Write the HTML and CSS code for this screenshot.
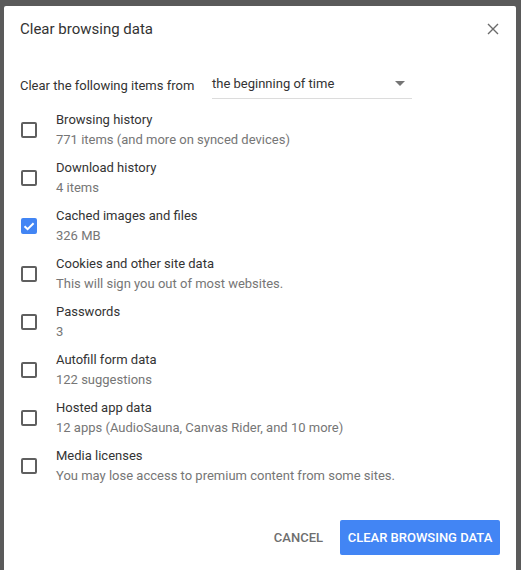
FILE: index.html
```html
<!DOCTYPE html>
<html>
<head>
<meta charset="utf-8">
<link rel="stylesheet" href="styles.css">
</head>
<body>
<div class="backdrop">
  <div class="dialog">
    <div class="header">
      <div class="title">Clear browsing data</div>
      <svg class="close" width="12" height="12" viewBox="0 0 12 12"><path d="M1 1L11 11M11 1L1 11" stroke="#6b6b6b" stroke-width="1.4" fill="none"/></svg>
    </div>
    <div class="range">
      <span class="range-label">Clear the following items from</span>
      <div class="select">
        <span>the beginning of time</span>
        <span class="arrow"></span>
      </div>
    </div>
    <div class="list">
      <div class="item"><span class="box"></span><div class="text"><div class="name">Browsing history</div><div class="sub">771 items (and more on synced devices)</div></div></div>
      <div class="item"><span class="box"></span><div class="text"><div class="name">Download history</div><div class="sub">4 items</div></div></div>
      <div class="item"><span class="box checked"><svg width="16" height="16" viewBox="0 0 16 16"><path d="M3.5 8.2L6.6 11.2L12.6 5.2" stroke="#fff" stroke-width="2" fill="none"/></svg></span><div class="text"><div class="name">Cached images and files</div><div class="sub">326 MB</div></div></div>
      <div class="item"><span class="box"></span><div class="text"><div class="name">Cookies and other site data</div><div class="sub">This will sign you out of most websites.</div></div></div>
      <div class="item"><span class="box"></span><div class="text"><div class="name">Passwords</div><div class="sub">3</div></div></div>
      <div class="item"><span class="box"></span><div class="text"><div class="name">Autofill form data</div><div class="sub">122 suggestions</div></div></div>
      <div class="item"><span class="box"></span><div class="text"><div class="name">Hosted app data</div><div class="sub">12 apps (AudioSauna, Canvas Rider, and 10 more)</div></div></div>
      <div class="item"><span class="box"></span><div class="text"><div class="name">Media licenses</div><div class="sub">You may lose access to premium content from some sites.</div></div></div>
    </div>
    <div class="actions">
      <button class="btn cancel">CANCEL</button>
      <button class="btn primary">CLEAR BROWSING DATA</button>
    </div>
  </div>
</div>
</body>
</html>
```

FILE: styles.css
```css
html, body {
  margin: 0;
  padding: 0;
  height: 100%;
  overflow: hidden;
  background: #5a5a5a;
}
.backdrop {
  padding: 6px 5px 0 4px;
  font-family: Roboto, "Liberation Sans", sans-serif;
}
.dialog {
  width: 512px;
  background: #fff;
  border-radius: 2px 2px 0 0;
  height: 570px;
  box-sizing: border-box;
}
.header {
  display: flex;
  align-items: center;
  justify-content: space-between;
  padding: 13px 17px 0 16px;
  height: 20px;
}
.title {
  font-size: 15px;
  line-height: 20px;
  color: #333;
}
.close {
  display: block;
}
.range {
  display: flex;
  align-items: center;
  padding: 0 0 0 16px;
  margin-top: 34px;
  height: 26px;
}
.range-label {
  font-size: 13px;
  color: #333;
  line-height: 20px;
  width: 192px;
}
.select {
  width: 200px;
  display: flex;
  align-items: center;
  justify-content: space-between;
  border-bottom: 1px solid #dcdcdc;
  height: 25px;
  font-size: 13px;
  color: #333;
  box-sizing: border-box;
  padding: 0 7px 4px 0;
}
.arrow {
  width: 0;
  height: 0;
  border-left: 5px solid transparent;
  border-right: 5px solid transparent;
  border-top: 5px solid #757575;
}
.list {
  margin-top: 8px;
}
.item {
  display: flex;
  align-items: center;
  height: 48px;
  padding-left: 17px;
}
.box {
  width: 16px;
  height: 16px;
  box-sizing: border-box;
  border: 2px solid #5f5f5f;
  border-radius: 2px;
  margin-right: 19px;
  flex: none;
  display: flex;
  align-items: center;
  justify-content: center;
  position: relative;
  top: -1px;
}
.box.checked {
  background: #4285f4;
  border-color: #4285f4;
}
.box.checked svg {
  display: block;
  flex: none;
}
.text {
  font-size: 13px;
  line-height: 20px;
  margin-top: -2px;
}
.name {
  color: #333;
}
.sub {
  color: #767676;
}
.actions {
  display: flex;
  justify-content: flex-end;
  align-items: center;
  padding: 0 16px 0 0;
  margin-top: 29px;
  gap: 9px;
}
.btn {
  font-family: Roboto, "Liberation Sans", sans-serif;
  font-size: 13px;
  font-weight: 500;
  border: none;
  border-radius: 2px;
  height: 35px;
  padding: 0 8px;
  white-space: nowrap;
  cursor: pointer;
}
.cancel {
  background: transparent;
  color: #6e6e6e;
}
.primary {
  background: #4285f4;
  color: #fff;
  width: 160px;
  padding: 0;
}
```
